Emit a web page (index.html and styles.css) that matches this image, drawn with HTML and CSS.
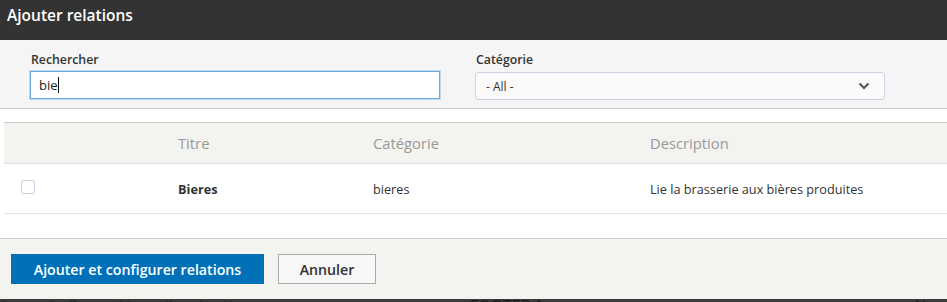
FILE: index.html
```html
<!DOCTYPE html>
<html lang="fr">
<head>
<meta charset="utf-8">
<title>Ajouter relations</title>
<link rel="stylesheet" href="styles.css">
</head>
<body>
<div class="dialog">
  <div class="titlebar"><span class="title">Ajouter relations</span></div>
  <div class="filters">
    <div class="field">
      <label class="label" for="q">Rechercher</label>
      <div class="input focused"><span>bie</span><span class="caret"></span></div>
    </div>
    <div class="field">
      <label class="label">Catégorie</label>
      <div class="select">
        <span>- All -</span>
        <svg class="chev" width="12" height="8" viewBox="0 0 12 8"><polyline points="1.5,1.5 6,6 10.5,1.5" fill="none" stroke="#555" stroke-width="2"/></svg>
      </div>
    </div>
  </div>
  <div class="table">
    <div class="thead">
      <div class="c c0"></div>
      <div class="c c1">Titre</div>
      <div class="c c2">Catégorie</div>
      <div class="c c3">Description</div>
    </div>
    <div class="trow">
      <div class="c c0"><span class="check"></span></div>
      <div class="c c1 strong">Bieres</div>
      <div class="c c2">bieres</div>
      <div class="c c3">Lie la brasserie aux bières produites</div>
    </div>
  </div>
  <div class="footer">
    <button class="btn primary">Ajouter et configurer relations</button>
    <button class="btn secondary">Annuler</button>
  </div>
  <div class="under">
    <span class="u1">ition</span><span class="u2">|</span><span class="u3">Paramètres d'agrégation</span><span class="u4">FOOTER 1</span><span class="u5">Ajouter</span>
  </div>
</div>
</body>
</html>
```

FILE: styles.css
```css
* { box-sizing: border-box; }
html, body { margin: 0; padding: 0; }
body {
  font-family: "Open Sans", "Liberation Sans", sans-serif;
  color: #333;
  background: #fff;
  width: 947px;
  height: 302px;
  overflow: hidden;
}
.dialog { width: 947px; display: flex; flex-direction: column; }
.titlebar {
  height: 40px;
  background: #333;
  padding: 0 7px;
}
.title {
  display: block;
  color: #fff;
  font-size: 15.5px;
  font-weight: 600;
  line-height: 30px;
}
.filters {
  background: #f5f5f5;
  border-bottom: 1px solid #ccc;
  height: 69px;
  padding: 11px 0 0 30px;
  display: grid;
  grid-template-columns: 410px 410px;
  column-gap: 35px;
}
.field { display: flex; flex-direction: column; }
.label {
  font-size: 12.3px;
  font-weight: 600;
  line-height: 18px;
  color: #333;
  padding-left: 1px;
  margin-bottom: 2px;
}
.input {
  height: 28px;
  background: #fff;
  border: 1px solid #6fa8dc;
  box-shadow: 0 0 0 1px #bcd8f2;
  display: flex;
  align-items: center;
  padding-left: 8px;
  font-size: 13px;
  color: #222;
}
.caret {
  display: inline-block;
  width: 1px;
  height: 16px;
  background: #111;
}
.select {
  margin-top: 1px;
  height: 28px;
  background: #fafafa;
  border: 1px solid #cbd4e3;
  border-radius: 3px;
  display: flex;
  align-items: center;
  justify-content: space-between;
  padding: 0 14px 0 10px;
  font-size: 12px;
  color: #333;
}
.chev { display: block; }
.table {
  margin: 13px 0 0 4px;
  width: 960px;
  border-top: 1px solid #ccc;
}
.thead, .trow {
  display: grid;
  grid-template-columns: 174px 195px 277px 1fr;
  align-items: center;
}
.thead {
  height: 41px;
  background: #f3f3ef;
  border-bottom: 1px solid #e2e2e2;
  color: #999;
  font-size: 14.75px;
}
.trow {
  height: 50px;
  border-bottom: 1px solid #e2e2e2;
  font-size: 12.7px;
  color: #333;
}
.c { white-space: nowrap; }
.c0 { padding-left: 17px; display: flex; align-items: center; }
.trow .c0 { margin-top: -4px; }
.strong { font-weight: 700; }
.check {
  display: block;
  width: 14px;
  height: 14px;
  border: 1px solid #c9d2e2;
  border-radius: 2px;
  background: #fff;
}
.footer {
  margin-top: 24px;
  height: 61px;
  background: #f3f3ef;
  border-top: 1px solid #ccc;
  padding: 15px 0 0 11px;
  display: flex;
  align-items: flex-start;
  gap: 14px;
}
.btn {
  font-family: "Open Sans", "Liberation Sans", sans-serif;
  font-size: 14.2px;
  font-weight: 600;
  height: 30px;
  margin: 0;
  cursor: pointer;
}
.primary {
  width: 253px;
  background: #0071b8;
  color: #fff;
  border: 0;
}
.secondary {
  width: 98px;
  background: #f7f7f7;
  color: #333;
  border: 1px solid #aaa;
}
.under {
  height: 10px;
  background: #3a3a3a;
  display: flex;
  font-size: 16px;
  line-height: 10px;
  color: #1d2a3a;
  overflow: hidden;
  white-space: nowrap;
  padding-top: 2px;
}
.under span { display: block; }
.u1 { margin-left: -8px; }
.u2 { margin-left: 22px; }
.u3 { margin-left: 12px; }
.u4 { margin-left: 218px; color: #1a1a1a; }
.u5 { margin-left: auto; margin-right: -20px; color: #1a1a1a; }
```
